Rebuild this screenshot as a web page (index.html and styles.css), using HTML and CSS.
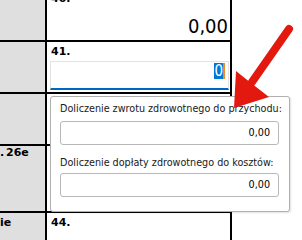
FILE: index.html
```html
<!DOCTYPE html>
<html lang="pl">
<head>
    <meta charset="UTF-8">
    <title>Formularz</title>
    <link rel="stylesheet" href="styles.css">
</head>
<body>
    <!-- Form rows -->
    <div class="sheet">
        <div class="row row-40">
            <div class="side"></div>
            <div class="cell">
                <span class="num">40.</span>
                <div class="amount">0,00</div>
            </div>
        </div>
        <div class="row row-41">
            <div class="side"></div>
            <div class="cell">
                <span class="num">41.</span>
                <div class="field active">
                    <span class="sel">0</span><span class="caret"></span>
                </div>
            </div>
        </div>
        <div class="row row-42">
            <div class="side"></div>
            <div class="cell"></div>
        </div>
        <div class="row row-43">
            <div class="side"><span class="side-label top">. 26e</span></div>
            <div class="cell"></div>
        </div>
        <div class="row row-44">
            <div class="side"><span class="side-label">ie</span></div>
            <div class="cell">
                <span class="num">44.</span>
            </div>
        </div>
    </div>

    <!-- Popup with details -->
    <div class="popup">
        <label class="popup-label">Doliczenie zwrotu zdrowotnego do przychodu:</label>
        <div class="popup-field">0,00</div>
        <label class="popup-label second">Doliczenie dopłaty zdrowotnego do kosztów:</label>
        <div class="popup-field">0,00</div>
    </div>

    <svg class="arrow" width="302" height="240" viewBox="0 0 302 240">
        <line x1="289" y1="29" x2="252" y2="82" stroke="#e3180f" stroke-width="8" stroke-linecap="round"/>
        <polygon points="234,108 236,71 251,83 269,97" fill="#e3180f"/>
    </svg>
</body>
</html>
```

FILE: styles.css
```css
body {
    margin: 0;
    width: 302px;
    height: 240px;
    overflow: hidden;
    background: #fff;
    font-family: "DejaVu Sans Condensed", "DejaVu Sans", sans-serif;
    color: #000;
    position: relative;
}
.sheet {
    width: 232px;
    margin-top: -10px;
}
.row {
    display: flex;
    border-bottom: 2px solid #000;
}
.side {
    width: 45px;
    background: #dfdfdf;
    border-right: 2px solid #000;
    overflow: hidden;
    white-space: nowrap;
}
.cell {
    width: 178px;
    padding: 0 2px 0 3px;
    border-right: 2px solid #000;
    display: flex;
    flex-direction: column;
}
.row-40 {
    height: 50px;
}
.row-41 {
    height: 50px;
}
.row-42 {
    height: 50px;
}
.row-43 {
    height: 65px;
}
.row-44 {
    height: 27px;
    border-bottom: none;
}
.num {
    font-family: "DejaVu Sans", sans-serif;
    font-weight: bold;
    font-size: 11px;
    line-height: 13px;
    margin: 3px 0 0 1px;
}
.row-40 .num {
    margin-top: 2px;
}
.amount {
    font-size: 20px;
    line-height: 24px;
    text-align: right;
    margin-top: 9px;
}
.field {
    height: 25px;
    margin: 3px -1px 0 0;
    border: 1px solid #e3e3e3;
    border-bottom: 2px solid #0067c0;
    display: flex;
    justify-content: flex-end;
    align-items: flex-start;
    padding: 1px 3px 0 0;
}
.sel {
    background: #0078d7;
    color: #fff;
    font-size: 15px;
    line-height: 16px;
}
.caret {
    width: 2px;
    height: 16px;
    background: #f08a24;
}
.side-label {
    display: block;
    font-family: "DejaVu Sans", sans-serif;
    font-weight: bold;
    font-size: 11px;
    line-height: 13px;
    margin-top: 3px;
}
.side-label.top {
    margin-top: 0;
    word-spacing: -2px;
}
.popup {
    position: absolute;
    left: 50px;
    top: 96px;
    width: 240px;
    height: 116px;
    box-sizing: border-box;
    background: #fff;
    border: 1px solid #b0b0b0;
    border-radius: 3px;
    box-shadow: 1px 1px 2px rgba(0, 0, 0, 0.12);
    padding: 5px 10px 0 9px;
    display: flex;
    flex-direction: column;
}
.popup-label {
    font-size: 10.7px;
    line-height: 13px;
    color: #1a1a1a;
    white-space: nowrap;
    margin-bottom: 6px;
}
.popup-label.second {
    margin: 11px 0 4px;
}
.popup-field {
    height: 24px;
    box-sizing: border-box;
    border: 1px solid #b8b8b8;
    border-radius: 3px;
    font-size: 10.7px;
    line-height: 22px;
    text-align: right;
    padding-right: 8px;
    color: #000;
}
.arrow {
    position: absolute;
    left: 0;
    top: 0;
    pointer-events: none;
}
```
